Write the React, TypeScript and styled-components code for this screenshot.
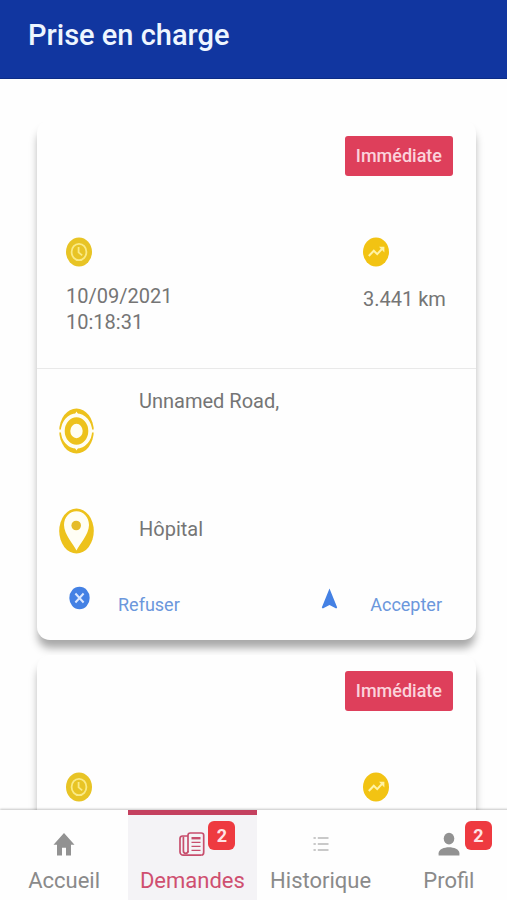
import React from "react";
import styled, { createGlobalStyle } from "styled-components";

const GlobalStyle = createGlobalStyle`
  *, *::before, *::after { box-sizing: border-box; }
  body {
    margin: 0;
    background: #fefefe;
    color: #757575;
    font-family: Roboto, "Liberation Sans", sans-serif;
  }
  button { font: inherit; }
`;

const Screen = styled.div`
  display: flex;
  flex-direction: column;
  height: 100vh;
  overflow: hidden;
`;

const Header = styled.header`
  flex: none;
  padding: 17px 28px 25px;
  background: #1136a0;
  border-bottom: 1px solid #0c2c86;
  color: #eef6ff;
`;

const Title = styled.h1`
  margin: 0;
  font-size: 29px;
  line-height: 36px;
  font-weight: 500;
`;

const RequestList = styled.main`
  flex: 1;
  min-height: 0;
  display: flex;
  flex-direction: column;
  gap: 15px;
  padding: 41px 31px 0 37px;
  overflow-y: auto;
  scrollbar-width: none;
`;

const Card = styled.article`
  flex: none;
  border-radius: 13px;
  background: #fefefe;
  box-shadow: 0 9px 9px -1px rgba(0, 0, 0, 0.34);
`;

const Summary = styled.div`
  display: flex;
  flex-direction: column;
  gap: 61px;
  padding: 16px 23px 33px 29px;
  border-bottom: 1px solid #e9e9e9;
`;

const Priority = styled.span`
  align-self: flex-end;
  padding: 0 11px;
  border-radius: 3px;
  background: #de3f5b;
  color: #fbd3dc;
  font-size: 18px;
  line-height: 40px;
  font-weight: 500;
`;

const Facts = styled.div`
  display: flex;
  justify-content: space-between;
`;

const Fact = styled.div<{ $gap: number }>`
  display: flex;
  flex-direction: column;
  gap: ${(p) => p.$gap}px;
  min-width: 90px;
  font-size: 20px;
  line-height: 26px;
`;

const Line = styled.span`
  display: block;
`;

const Places = styled.div`
  display: flex;
  flex-direction: column;
  gap: 54px;
  padding: 19px 22px 0;
`;

const Place = styled.div<{ $centered?: boolean }>`
  display: flex;
  align-items: ${(p) => (p.$centered ? "flex-start" : "flex-end")};
  gap: 45px;
  height: ${(p) => (p.$centered ? 46 : 66)}px;
  font-size: 20px;
  line-height: 26px;
`;

const PlaceName = styled.span<{ $centered?: boolean }>`
  align-self: flex-start;
  padding-top: ${(p) => (p.$centered ? 8 : 0)}px;
`;

const Actions = styled.div`
  display: flex;
  justify-content: space-between;
  padding: 32px 34px 23px 32px;
`;

const ActionButton = styled.button<{ $gap: number }>`
  display: flex;
  align-items: flex-start;
  gap: ${(p) => p.$gap}px;
  padding: 0;
  border: 0;
  background: none;
  color: #6b97dc;
  font-size: 18px;
  line-height: 24px;
  cursor: pointer;
`;

const ActionLabel = styled.span`
  padding-top: 7px;
`;

const TabBar = styled.nav`
  flex: none;
  display: grid;
  grid-template-columns: repeat(4, 1fr);
  margin-right: -6px;
  background: #fefefe;
  box-shadow: 0 -1px 2px rgba(0, 0, 0, 0.22);
  z-index: 1;
`;

const Tab = styled.button<{ $active?: boolean }>`
  display: flex;
  flex-direction: column;
  align-items: center;
  gap: 8px;
  padding: 16px 0 3px;
  border: 0;
  border-top: 5px solid ${(p) => (p.$active ? "#c4405f" : "transparent")};
  background: ${(p) => (p.$active ? "#f4f3f6" : "transparent")};
  color: ${(p) => (p.$active ? "#cf4f70" : "#8a8a8a")};
  font-size: 22px;
  line-height: 32px;
  cursor: pointer;
`;

const TabIcon = styled.span`
  position: relative;
  display: flex;
  align-items: center;
  justify-content: center;
  width: 26px;
  height: 26px;
`;

const Count = styled.span`
  position: absolute;
  left: 29px;
  top: -10px;
  width: 27px;
  border-radius: 6px;
  background: #ee3a40;
  color: #ffe3e5;
  font-size: 18px;
  line-height: 29px;
  font-weight: 700;
  text-align: center;
`;

const YELLOW = "#edc21c";

const ClockIcon = () => (
  <svg width="26" height="30" viewBox="0 0 26 30" aria-hidden="true">
    <ellipse cx="13" cy="15" rx="13" ry="14.5" fill="#e8c425" />
    <ellipse cx="13" cy="15" rx="7.4" ry="8.2" fill="none" stroke="#faea86" strokeWidth="1.8" />
    <path d="M12.6 10v5.4l3.6 3" fill="none" stroke="#faea86" strokeWidth="1.8" />
  </svg>
);

const TrendIcon = () => (
  <svg width="26" height="30" viewBox="0 0 26 30" aria-hidden="true">
    <ellipse cx="13" cy="15" rx="13" ry="14.5" fill="#f2c313" />
    <path d="M5.8 19l5-5.3 3.4 3.4 5.4-5.8" fill="none" stroke="#fff3a6" strokeWidth="2" />
    <path d="M16 9.8h5.4v5.6z" fill="#fff3a6" />
  </svg>
);

const TargetIcon = () => (
  <svg width="35" height="46" viewBox="0 0 35 46" aria-hidden="true">
    <ellipse cx="17.5" cy="23" rx="17.3" ry="22.5" fill={YELLOW} />
    <ellipse cx="17.5" cy="23" rx="13.7" ry="15.6" fill="none" stroke="#fffef2" strokeWidth="3.8" />
    <path d="M17.5 3.5l3 5h-6zM17.5 42.5l3-5h-6z" fill="#fffef2" />
    <path d="M0 23h5M30 23h5" stroke="#fffef2" strokeWidth="3" />
    <ellipse cx="17.5" cy="23" rx="6.2" ry="7.2" fill="#fffef2" />
  </svg>
);

const PinIcon = () => (
  <svg width="35" height="46" viewBox="0 0 35 46" aria-hidden="true">
    <ellipse cx="17.5" cy="23" rx="17.3" ry="22.5" fill={YELLOW} />
    <path
      d="M17.5 42.5C15 37 5 26.5 5 17 5 9 10.6 3.2 17.5 3.2S30 9 30 17C30 26.5 20 37 17.5 42.5z"
      fill="#fffef5"
    />
    <circle cx="17.2" cy="17.5" r="4.8" fill="#e5bb2b" />
  </svg>
);

const RefuseIcon = () => (
  <svg width="21" height="24" viewBox="0 0 21 24" aria-hidden="true">
    <ellipse cx="10.5" cy="12" rx="10.2" ry="11.3" fill="#4481e4" />
    <path d="M6.4 7.5l8.2 9M14.6 7.5l-8.2 9" stroke="#dbe8ff" strokeWidth="2" />
  </svg>
);

const ArrowIcon = () => (
  <svg width="17" height="24" viewBox="0 0 17 24" aria-hidden="true">
    <path d="M8.5 2.5l7.7 19-1 .9-6.7-3.3-6.7 3.3-1-.9z" fill="#4481e4" />
  </svg>
);

const HomeIcon = () => (
  <svg width="22" height="24" viewBox="0 0 22 24" aria-hidden="true">
    <path d="M9 23.5v-7.8h4v7.8h5V12.8h3.5L11 1 .5 12.8H4v10.7z" fill="#929292" />
  </svg>
);

const NewsIcon = () => (
  <svg width="26" height="26" viewBox="0 0 26 26" fill="none" stroke="#c74e6d" strokeWidth="1.7" aria-hidden="true">
    <path d="M22.5 24.2H4.3A3.3 3.3 0 0 1 1 20.9V7.6C1 6 2 5 3.6 5H9" />
    <path d="M9 21.2V4.3C9 2.8 10 2 11.4 2h10.8C23.7 2 24.7 2.8 24.7 4.3v17c0 1.7-.8 2.9-2.3 2.9" />
    <path d="M9 20a2.3 2.3 0 0 1-4.6 0V5.4" />
    <path d="M12.5 7.2h9" strokeWidth="2.4" />
    <path d="M12.5 11.4h9M12.5 15.4h9M12.5 19.4h9" strokeWidth="1.3" />
  </svg>
);

const ListIcon = () => (
  <svg width="16" height="16" viewBox="0 0 16 16" stroke="#b8b8b8" strokeWidth="1.5" aria-hidden="true">
    <path d="M.5 2h2.3M.5 8h2.3M.5 14h2.3M4.8 2h10.7M4.8 8h10.7M4.8 14h10.7" />
  </svg>
);

const PersonIcon = () => (
  <svg width="22" height="24" viewBox="0 0 22 24" fill="#929292" aria-hidden="true">
    <ellipse cx="11" cy="6.6" rx="5.3" ry="5.9" />
    <path d="M.6 23.6v-2.3c0-4 5.6-6 10.4-6s10.4 2 10.4 6v2.3z" />
  </svg>
);

const requests = [
  { id: 1, date: "10/09/2021", time: "10:18:31", distance: "3.441 km", from: "Unnamed Road,", to: "Hôpital" },
  { id: 2, date: "10/09/2021", time: "10:18:31", distance: "3.441 km", from: "Unnamed Road,", to: "Hôpital" },
];

const tabs = [
  { label: "Accueil", icon: <HomeIcon /> },
  { label: "Demandes", icon: <NewsIcon />, count: 2, active: true },
  { label: "Historique", icon: <ListIcon /> },
  { label: "Profil", icon: <PersonIcon />, count: 2 },
];

export default function App() {
  return (
    <Screen>
      <GlobalStyle />
      <Header>
        <Title>Prise en charge</Title>
      </Header>
      <RequestList>
        {requests.map((r) => (
          <Card key={r.id}>
            <Summary>
              <Priority>Immédiate</Priority>
              <Facts>
                <Fact $gap={16}>
                  <ClockIcon />
                  <div>
                    <Line>{r.date}</Line>
                    <Line>{r.time}</Line>
                  </div>
                </Fact>
                <Fact $gap={19}>
                  <TrendIcon />
                  <Line>{r.distance}</Line>
                </Fact>
              </Facts>
            </Summary>
            <Places>
              <Place>
                <TargetIcon />
                <PlaceName>{r.from}</PlaceName>
              </Place>
              <Place $centered>
                <PinIcon />
                <PlaceName $centered>{r.to}</PlaceName>
              </Place>
            </Places>
            <Actions>
              <ActionButton $gap={28}>
                <RefuseIcon />
                <ActionLabel>Refuser</ActionLabel>
              </ActionButton>
              <ActionButton $gap={32}>
                <ArrowIcon />
                <ActionLabel>Accepter</ActionLabel>
              </ActionButton>
            </Actions>
          </Card>
        ))}
      </RequestList>
      <TabBar>
        {tabs.map((t) => (
          <Tab key={t.label} $active={t.active} aria-current={t.active ? "page" : undefined}>
            <TabIcon>
              {t.icon}
              {t.count && <Count>{t.count}</Count>}
            </TabIcon>
            {t.label}
          </Tab>
        ))}
      </TabBar>
    </Screen>
  );
}
